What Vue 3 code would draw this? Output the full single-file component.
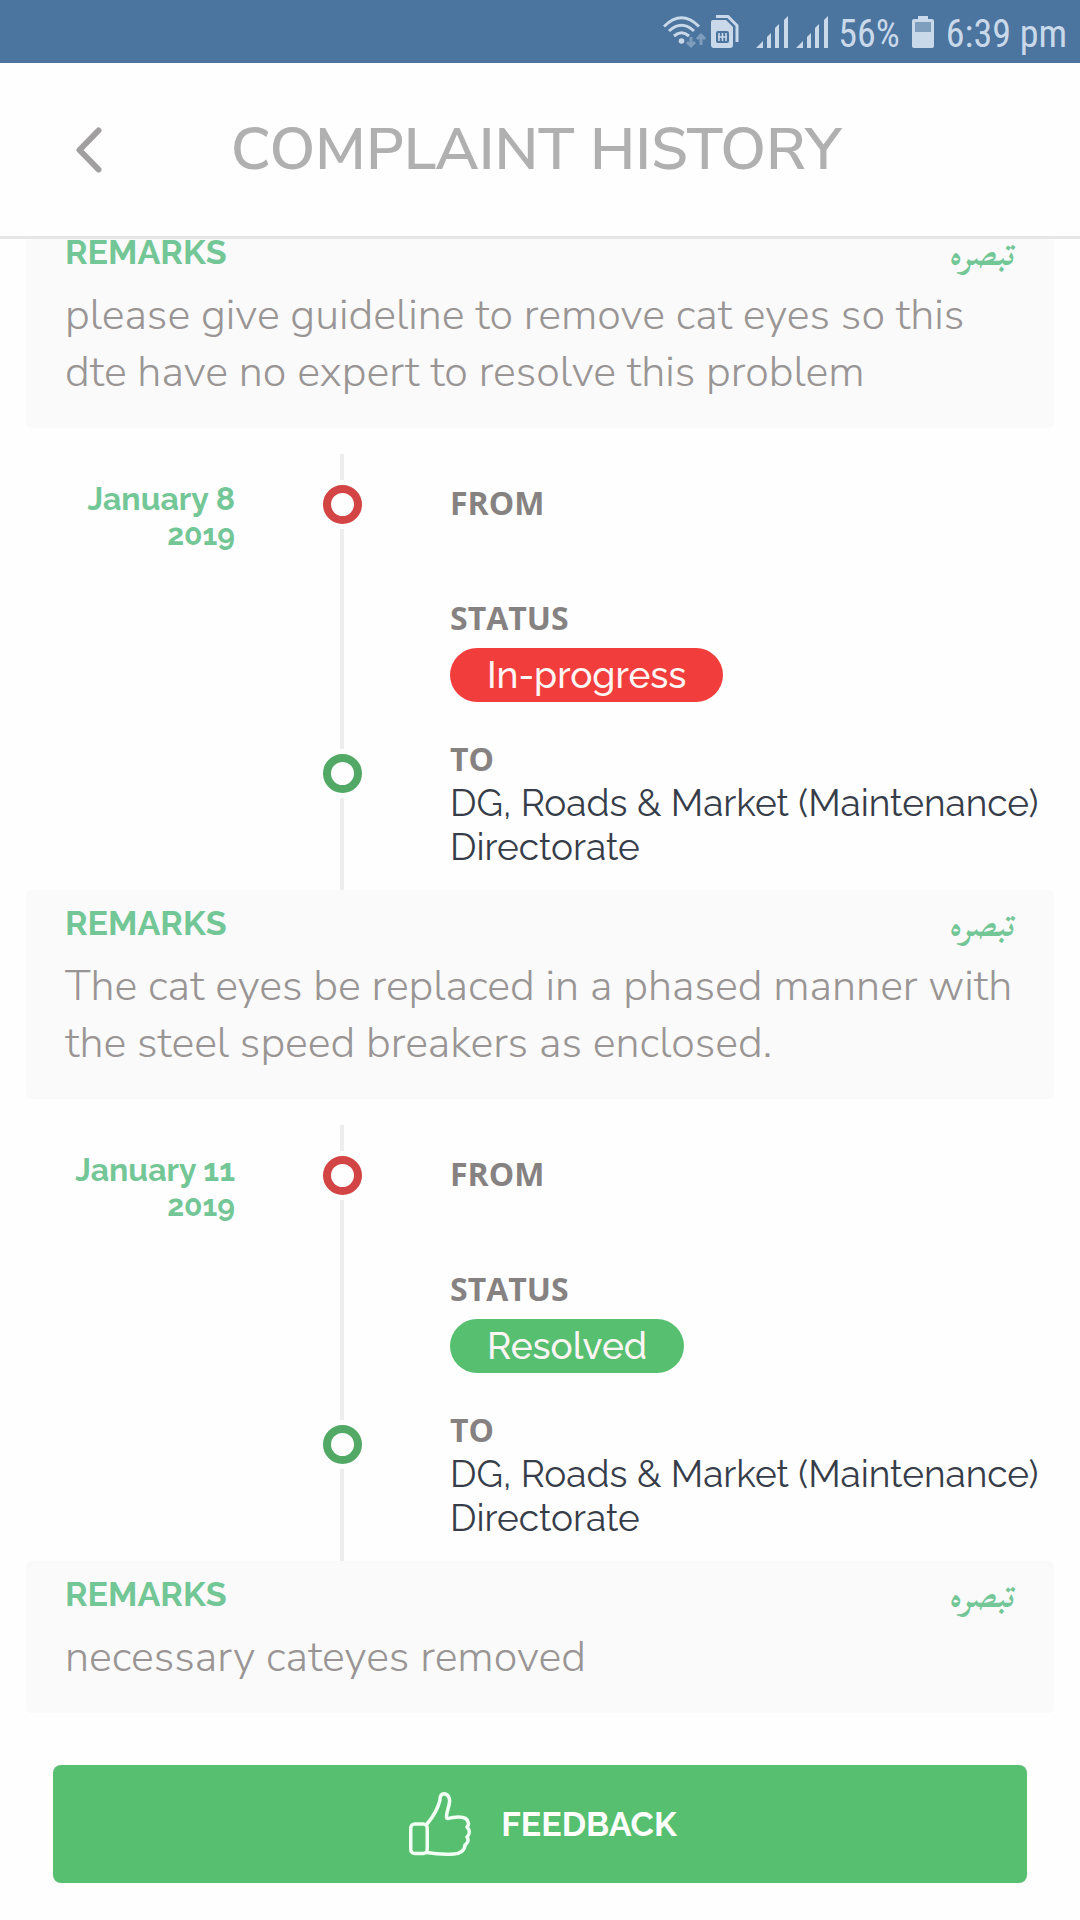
<script setup>
const entries = [
  {
    id: 2,
    day: 'January 8',
    year: '2019',
    from: '',
    status: 'In-progress',
    tone: 'progress',
    to: 'DG, Roads & Market (Maintenance) Directorate',
    remarks: 'The cat eyes be replaced in a phased manner with the steel speed breakers as enclosed.',
  },
  {
    id: 3,
    day: 'January 11',
    year: '2019',
    from: '',
    status: 'Resolved',
    tone: 'resolved',
    to: 'DG, Roads & Market (Maintenance) Directorate',
    remarks: 'necessary cateyes removed',
  },
]
const firstRemarks =
  'please give guideline to remove cat eyes so this dte have no expert to resolve this problem'
</script>

<template>
  <div class="screen">
    <div class="status-bar">
      <svg class="wifi" width="44" height="34" viewBox="0 0 44 34" aria-hidden="true">
        <g fill="none" stroke="#c9d9e9" stroke-width="3">
          <path d="M1 11.500Q18.500-6 36 11.500" />
          <path d="M6 16Q18.500 4.500 31 16" />
          <path d="M11 21Q18.500 14.500 26 21" />
        </g>
        <circle cx="18.500" cy="26" r="2.800" fill="#c9d9e9" />
        <g fill="none" stroke="#7f9ebd" stroke-width="3">
          <path d="M28 22v9M24 27l4 4 4-4" />
          <path d="M38 30v-9M34 24l4-4 4 4" />
        </g>
      </svg>
      <svg class="sim" width="30" height="34" viewBox="0 0 30 34" aria-hidden="true">
        <path d="M6 1.500h12l9 9V27" fill="none" stroke="#c9d9e9" stroke-width="3" />
        <path d="M3 5h13l7 7v18q0 3-3 3H4q-3 0-3-3V7q0-2 2-2z" fill="#c9d9e9" />
        <rect x="6" y="16" width="13" height="12" rx="2" fill="#4b749f" />
        <path d="M9 18v8M12.500 18v8M16 18v8M8 22h9" stroke="#c9d9e9" stroke-width="1.600" />
      </svg>
      <svg v-for="n in 2" :key="n" class="signal" width="32" height="32" viewBox="0 0 32 32" aria-hidden="true">
        <path d="M0 32l7-7v7zM11 21l4-4v15h-4zM19 12l4-4v24h-4zM28 4l4-4v32h-4z" fill="#c9d9e9" />
      </svg>
      <span class="percent">56%</span>
      <svg class="battery" width="22" height="32" viewBox="0 0 22 32" aria-hidden="true">
        <path d="M6 0h10v3h4q2 0 2 2v25q0 2-2 2H2q-2 0-2-2V5q0-2 2-2h4z" fill="#c9d9e9" />
        <rect x="3" y="6" width="16" height="10" fill="#7f9ebd" />
      </svg>
      <span class="clock">6:39 pm</span>
    </div>

    <header class="app-header">
      <button class="back" type="button" aria-label="Back">
        <svg width="26" height="46" viewBox="0 0 26 46" aria-hidden="true">
          <path d="M22.500 3.500L3.500 23l19 19.500" fill="none" stroke="#a19f9f" stroke-width="6" stroke-linecap="round" stroke-linejoin="round" />
        </svg>
      </button>
      <h1>COMPLAINT HISTORY</h1>
    </header>

    <main class="viewport">
      <div class="history">
        <section class="remarks">
          <div class="remarks-head">
            <h2>REMARKS</h2>
            <span lang="ur" dir="rtl">تبصرہ</span>
          </div>
          <p>{{ firstRemarks }}</p>
        </section>

        <template v-for="entry in entries" :key="entry.id">
          <section class="entry">
            <div class="date">
              <div>{{ entry.day }}</div>
              <div class="year">{{ entry.year }}</div>
            </div>
            <div class="rail">
              <i class="line lead"></i>
              <i class="node start"></i>
              <i class="line middle"></i>
              <i class="node end"></i>
              <i class="line tail"></i>
            </div>
            <div class="details">
              <h3>FROM</h3>
              <p class="office from">{{ entry.from }}</p>
              <h3>STATUS</h3>
              <span class="pill" :class="entry.tone">{{ entry.status }}</span>
              <h3>TO</h3>
              <p class="office">{{ entry.to }}</p>
            </div>
          </section>
          <section class="remarks">
            <div class="remarks-head">
              <h2>REMARKS</h2>
              <span lang="ur" dir="rtl">تبصرہ</span>
            </div>
            <p>{{ entry.remarks }}</p>
          </section>
        </template>
      </div>
    </main>

    <button class="feedback" type="button">
      <svg width="62" height="64" viewBox="0 0 62 64" aria-hidden="true">
        <g fill="none" stroke="#f1fff4" stroke-width="3.500" stroke-linejoin="round" stroke-linecap="round">
          <rect x="1.750" y="32" width="16.500" height="29.500" rx="4" />
          <path d="M18 32C24 25 29 16 31 8C31 4 32 1.750 35 1.750C39 2 41 6 40.500 10C40 16 37 21 37.500 25.500C38 27.500 40 26 44 25.500C51 24.500 58 25 59 30C60 32 59 34 58 35C61 38 61 42 58 45C60 48 59 51 56 53C56 58 51 62 45 62C36 62.500 26 62 18 60.500" />
        </g>
      </svg>
      <span>FEEDBACK</span>
    </button>
  </div>
</template>

<style>
body {
  margin: 0;
  background: #fefefe;
}
</style>

<style scoped>
.screen {
  font-family: Raleway, Lato, sans-serif;
  background: #fefefe;
}
h1,
h2,
h3,
p {
  margin: 0;
}
button {
  border: 0;
  padding: 0;
  font-family: inherit;
  cursor: pointer;
}
svg {
  display: block;
  flex: none;
}

.status-bar {
  display: flex;
  justify-content: flex-end;
  align-items: center;
  height: 63px;
  padding-right: 13px;
  background: #4b749f;
  color: #c9d9e9;
  font-family: 'Roboto Condensed', Roboto, sans-serif;
  font-size: 38px;
  line-height: 40px;
}
.percent,
.clock {
  padding-top: 4px;
}
.sim {
  margin: 0 16px 0 3px;
}
.signal {
  margin-right: 8px;
}
.percent {
  margin-left: 2px;
}
.battery {
  margin: 0 12px;
}

.app-header {
  display: grid;
  grid-template-columns: 176px 1fr 184px;
  align-items: center;
  height: 173px;
  border-bottom: 3px solid #e6e6e6;
}
.back {
  display: flex;
  align-items: center;
  height: 100px;
  padding-left: 76px;
  background: none;
}
h1 {
  text-align: center;
  white-space: nowrap;
  color: #b0b0b0;
  font-family: 'Nunito Sans', Lato, sans-serif;
  font-size: 59px;
  font-weight: 600;
  line-height: 72px;
}

.viewport {
  overflow: hidden;
}
.history {
  margin-top: -20px;
}

.remarks {
  margin: 0 26px;
  padding: 13px 39px 27px;
  border-radius: 5px;
  background: #fafafa;
}
.remarks-head {
  display: flex;
  justify-content: space-between;
  align-items: center;
  height: 40px;
  margin-bottom: 15px;
  color: #73c695;
}
.remarks-head h2 {
  font-size: 34px;
  font-weight: 700;
  line-height: 40px;
}
.remarks-head span {
  padding-top: 6px;
  font-family: 'Scheherazade New', Scheherazade, Amiri, 'Noto Sans Arabic', 'DejaVu Sans', sans-serif;
  font-size: 31px;
  font-weight: 700;
  line-height: 40px;
}
.remarks p {
  color: #999594;
  font-family: 'Nunito Sans', Lato, sans-serif;
  font-size: 43px;
  font-weight: 300;
  line-height: 57px;
}

.entry {
  display: grid;
  grid-template-columns: 235px 214px 1fr;
  margin-top: 26px;
}
.date {
  padding-top: 27px;
  text-align: right;
  color: #73c695;
  font-size: 32px;
  font-weight: 700;
  line-height: 36px;
}
.year {
  font-size: 30px;
}
.rail {
  display: flex;
  flex-direction: column;
  align-items: center;
}
.line {
  width: 4px;
  background: #ededed;
}
.lead {
  height: 26px;
}
.middle {
  height: 220px;
}
.tail {
  flex: 1;
}
.node {
  box-sizing: border-box;
  width: 39px;
  height: 39px;
  margin: 5px 0;
  border: 8px solid;
  border-radius: 50%;
}
.start {
  border-color: #d34545;
}
.end {
  border-color: #52a865;
}
.details {
  padding: 29px 30px 21px 1px;
}
h3 {
  color: #868281;
  font-family: 'Open Sans', sans-serif;
  font-size: 32px;
  font-weight: 700;
  line-height: 40px;
}
.office {
  padding-top: 2px;
  color: #363d49;
  font-size: 37px;
  line-height: 44px;
}
.from {
  min-height: 44px;
  margin-bottom: 29px;
}
.pill {
  display: block;
  width: fit-content;
  margin: 10px 0 37px;
  padding: 0 37px;
  border-radius: 27px;
  color: #fff5f4;
  font-size: 37px;
  font-weight: 500;
  line-height: 54px;
}
.progress {
  background: #f23d3d;
}
.resolved {
  background: #57bf70;
}

.feedback {
  display: flex;
  justify-content: center;
  align-items: center;
  gap: 30px;
  width: calc(100% - 106px);
  height: 118px;
  margin: 52px 53px 37px;
  padding-left: 6px;
  border-radius: 8px;
  background: #57bf70;
  color: #fff;
  font-size: 34px;
  font-weight: 700;
}
</style>
